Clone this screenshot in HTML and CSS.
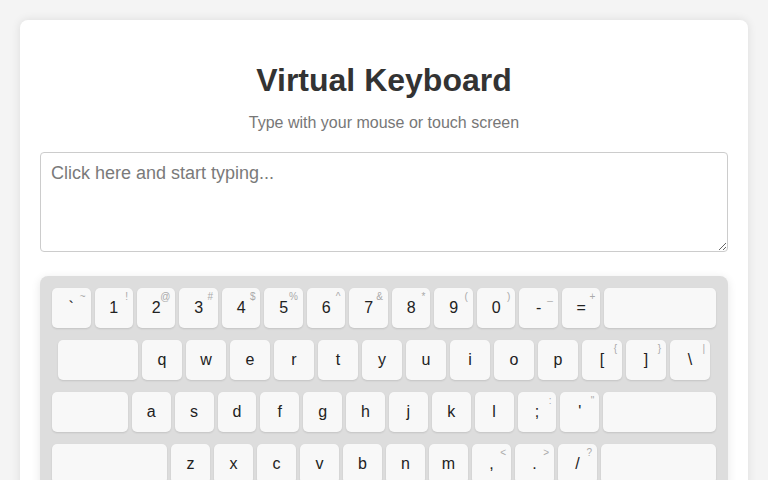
FILE: index.html
```html
<!DOCTYPE html>
<html lang="en">
<head>
<meta charset="utf-8">
<title>Virtual Keyboard</title>
<link rel="stylesheet" href="styles.css">
</head>
<body>
<main class="card">
  <h1 class="title">Virtual Keyboard</h1>
  <p class="subtitle">Type with your mouse or touch screen</p>
  <textarea class="input" placeholder="Click here and start typing..."></textarea>
  <div class="keyboard">
    <div class="row">
      <div class="key">`<span class="alt">~</span></div>
      <div class="key">1<span class="alt">!</span></div>
      <div class="key">2<span class="alt">@</span></div>
      <div class="key">3<span class="alt">#</span></div>
      <div class="key">4<span class="alt">$</span></div>
      <div class="key">5<span class="alt">%</span></div>
      <div class="key">6<span class="alt">^</span></div>
      <div class="key">7<span class="alt">&amp;</span></div>
      <div class="key">8<span class="alt">*</span></div>
      <div class="key">9<span class="alt">(</span></div>
      <div class="key">0<span class="alt">)</span></div>
      <div class="key">-<span class="alt">_</span></div>
      <div class="key">=<span class="alt">+</span></div>
      <div class="key backspace"></div>
    </div>
    <div class="row">
      <div class="key tab"></div>
      <div class="key">q</div>
      <div class="key">w</div>
      <div class="key">e</div>
      <div class="key">r</div>
      <div class="key">t</div>
      <div class="key">y</div>
      <div class="key">u</div>
      <div class="key">i</div>
      <div class="key">o</div>
      <div class="key">p</div>
      <div class="key">[<span class="alt">{</span></div>
      <div class="key">]<span class="alt">}</span></div>
      <div class="key">\<span class="alt">|</span></div>
    </div>
    <div class="row">
      <div class="key caps"></div>
      <div class="key">a</div>
      <div class="key">s</div>
      <div class="key">d</div>
      <div class="key">f</div>
      <div class="key">g</div>
      <div class="key">h</div>
      <div class="key">j</div>
      <div class="key">k</div>
      <div class="key">l</div>
      <div class="key">;<span class="alt">:</span></div>
      <div class="key">'<span class="alt">"</span></div>
      <div class="key enter"></div>
    </div>
    <div class="row">
      <div class="key shift"></div>
      <div class="key">z</div>
      <div class="key">x</div>
      <div class="key">c</div>
      <div class="key">v</div>
      <div class="key">b</div>
      <div class="key">n</div>
      <div class="key">m</div>
      <div class="key">,<span class="alt">&lt;</span></div>
      <div class="key">.<span class="alt">&gt;</span></div>
      <div class="key">/<span class="alt">?</span></div>
      <div class="key shift"></div>
    </div>
  </div>
</main>
</body>
</html>
```
FILE: styles.css
```css
html, body {
  margin: 0;
  padding: 0;
}
body {
  background: #f4f4f4;
  padding: 20px;
  font-family: "Liberation Sans", Arial, sans-serif;
}
.card {
  background: #fff;
  border-radius: 8px;
  padding: 20px;
  box-shadow: 0 0 10px rgba(0, 0, 0, 0.1);
}
.title {
  font-size: 32px;
  font-weight: bold;
  color: #333;
  text-align: center;
  margin: 21.5px 0 15px;
  line-height: normal;
}
.subtitle {
  font-size: 16px;
  color: #777;
  text-align: center;
  margin: 0 0 20px;
}
.input {
  display: block;
  width: 100%;
  height: 100px;
  box-sizing: border-box;
  border: 1px solid #ccc;
  border-radius: 4px;
  padding: 10px;
  font-family: "Liberation Sans", Arial, sans-serif;
  font-size: 18px;
  color: #333;
  resize: vertical;
  margin: 0 0 24px;
}
.input::placeholder {
  color: #7a7a7a;
}
.keyboard {
  background: #ddd;
  border-radius: 8px;
  padding: 12px;
  box-shadow: 0 2px 10px rgba(0, 0, 0, 0.1);
}
.row {
  display: flex;
  justify-content: center;
  gap: 4px;
  margin-bottom: 12px;
}
.key {
  position: relative;
  flex: 0 1 40px;
  min-width: 0;
  height: 40px;
  display: flex;
  align-items: center;
  justify-content: center;
  background: #f8f8f8;
  border-radius: 5px;
  box-shadow: 0 1px 2px rgba(0, 0, 0, 0.12);
  font-size: 16px;
  color: #222;
}
.key .alt {
  position: absolute;
  top: 3px;
  right: 5px;
  font-size: 10px;
  color: #aaa;
}
.key.backspace { flex-basis: 116px; }
.key.tab { flex-basis: 80px; }
.key.caps { flex-basis: 78px; }
.key.enter { flex-basis: 116px; }
.key.shift { flex-basis: 118px; }
```
